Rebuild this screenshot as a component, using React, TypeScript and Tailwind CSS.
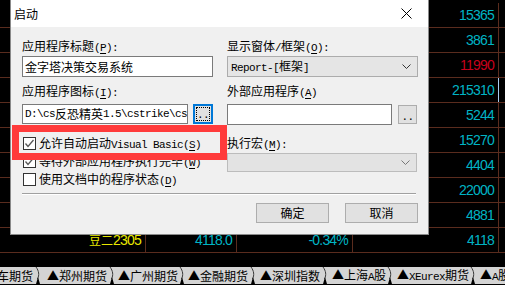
import React from "react";

const mono = "font-['Liberation_Mono',monospace] text-[11px] tracking-[-0.6px]";
const cjk = "font-['Noto_Sans_CJK_SC',sans-serif] text-[12px]";
const num = "font-['Liberation_Sans',Arial,sans-serif] text-[14px] tracking-[-0.8px]";

// "&X" marks the underlined accelerator letter
function Txt({ t }: { t: string }) {
  const out: React.ReactNode[] = [];
  const re = /&(.)|([\x20-\x25\x27-\x7e]+)|([^\x20-\x7e]+)/g;
  let m: RegExpExecArray | null;
  let i = 0;
  while ((m = re.exec(t))) {
    if (m[1]) out.push(<span key={i++} className={mono + " underline underline-offset-2"}>{m[1]}</span>);
    else if (m[2]) out.push(<span key={i++} className={mono + " whitespace-pre"}>{m[2]}</span>);
    else out.push(<span key={i++} className={cjk}>{m[3]}</span>);
  }
  return <>{out}</>;
}

const rows: [string, string][] = [
  ["15365", "text-[#00b4c4]"],
  ["3861", "text-[#00b4c4]"],
  ["11990", "text-[#c8001c]"],
  ["215310", "text-[#00b4c4]"],
  ["5244", "text-[#00b4c4]"],
  ["15270", "text-[#00b4c4]"],
  ["4404", "text-[#00b4c4]"],
  ["22000", "text-[#00b4c4]"],
  ["4881", "text-[#00b4c4]"],
];

const tabs = [
  { label: "车期货", w: "w-[42px]", pl: "pl-0 -ml-[3px]" },
  { label: "▲郑州期货", w: "w-[74px]", pl: "pl-[5px]" },
  { label: "▲广州期货", w: "w-[70px]", pl: "pl-[2px]" },
  { label: "▲金融期货", w: "w-[71px]", pl: "pl-[2px]" },
  { label: "▲深圳指数", w: "w-[72px]", pl: "pl-[3px]" },
  { label: "▲上海A股", w: "w-[63px]", pl: "pl-[3px]" },
  { label: "▲XEurex期货", w: "w-[85px]", pl: "pl-[5px]" },
];

function TabSep() {
  return (
    <svg width="8" height="17" viewBox="0 0 8 17" className="shrink-0">
      <path d="M2 0 C5 4 5.5 8 3.5 12" stroke="#3c3c3c" strokeWidth="1" fill="none" />
      <polygon points="2,17 4,10 6,17" fill="#000" />
    </svg>
  );
}

function Chevron({ color }: { color: string }) {
  return (
    <svg width="9" height="5" viewBox="0 0 9 5">
      <polyline points="0.5,0.5 4.5,4.5 8.5,0.5" stroke={color} strokeWidth="1" fill="none" />
    </svg>
  );
}

function Check({ on }: { on: boolean }) {
  return (
    <div className="w-[13px] h-[13px] border border-[#333] bg-white flex items-center justify-center">
      {on && (
        <svg width="11" height="11" viewBox="0 0 11 11">
          <polyline points="1.5,5.5 4,8.5 9.5,2" stroke="#555" strokeWidth="1.3" fill="none" />
        </svg>
      )}
    </div>
  );
}

function Board() {
  return (
    <div className="bg-black w-[505px] h-[285px] flex flex-col">
      <div className="h-[3px]" />
      {rows.map(([v, c], i) => (
        <div key={i} className="flex h-[25px] border-b border-[#5a2c1e]">
          <div className="w-[146px] border-r border-[#5a2c1e]" />
          <div className="w-[91px] border-r border-[#5a2c1e]" />
          <div className="w-[116px] border-r border-[#5a2c1e]" />
          <div
            className={
              "w-[146px] border-r flex items-center justify-end pr-[4px] " +
              (i === 3 ? "border-[#a8cdf0]" : "border-[#5a2c1e]")
            }
          >
            <span className={num + " " + c}>{v}</span>
          </div>
          <div className="flex-1" />
        </div>
      ))}
      <div className="flex h-[25px] border-b border-[#5a2c1e] text-[#00b4c4]">
        <div className="w-[146px] border-r border-[#5a2c1e] flex items-center justify-end pr-[4px] text-[#e8e800]">
          <span className={cjk}>豆二</span>
          <span className={num}>2305</span>
        </div>
        <div className="w-[91px] border-r border-[#5a2c1e] flex items-center justify-end pr-[4px]">
          <span className={num}>4118.0</span>
        </div>
        <div className="w-[116px] border-r border-[#5a2c1e] flex items-center justify-end pr-[4px]">
          <span className={num}>-0.34%</span>
        </div>
        <div className="w-[146px] border-r border-[#5a2c1e] flex items-center justify-end pr-[4px]">
          <span className={num}>4118</span>
        </div>
        <div className="flex-1" />
      </div>
      <div className="h-[14px]" />
      <div className="h-[17px] bg-[#d4d4d4] flex items-center overflow-hidden text-black leading-[17px]">
        {tabs.map((t) => (
          <div key={t.label} className={t.w + " shrink-0 flex items-center justify-between h-full"}>
            <span className={t.pl + " whitespace-nowrap"}>
              <Txt t={t.label} />
            </span>
            <TabSep />
          </div>
        ))}
        <span className="pl-[3px] whitespace-nowrap">
          <Txt t="▲A股" />
        </span>
      </div>
    </div>
  );
}

function Dialog() {
  return (
    <div className="absolute left-[10px] top-0 w-[419px] h-[235px] border-x border-b border-[#8a8a8a] flex flex-col text-black">
      <div className="h-[27px] bg-white flex items-center justify-between pl-[3px] pr-[16px]">
        <span className={cjk}>启动</span>
        <svg width="11" height="11" viewBox="0 0 11 11">
          <path d="M0.5 0.5 L10.5 10.5 M10.5 0.5 L0.5 10.5" stroke="#000" strokeWidth="1" />
        </svg>
      </div>
      <div className="flex-1 bg-[#f0f0f0] pl-[11px] pr-[9px] pt-[10px] leading-[16px]">
        <div className="flex gap-[14px]">
          <div className="w-[191px] flex flex-col">
            <div className="h-[16px]"><Txt t="应用程序标题(&P):" /></div>
            <div className="mt-[3px] h-[21px] bg-white border border-[#7a7a7a] flex items-center pl-[2px]">
              <Txt t="金字塔决策交易系统" />
            </div>
            <div className="mt-[5px] h-[16px]"><Txt t="应用程序图标(&I):" /></div>
            <div className="mt-[6px] flex items-center gap-[5px]">
              <div className="w-[166px] h-[20px] bg-white border border-[#7a7a7a] flex items-center pl-[2px] overflow-hidden whitespace-nowrap">
                <Txt t="D:\cs反恐精英1.5\cstrike\cs" />
              </div>
              <div className="w-[20px] h-[20px] border-2 border-[#0078d7] bg-[#e1e1e1] p-[1px]">
                <div className="w-full h-full border border-dotted border-black flex items-end justify-center pb-[1px]">
                  <span className={mono + " leading-[8px]"}>..</span>
                </div>
              </div>
            </div>
            <div className="mt-[10px] flex flex-col">
              <div className="h-[18px] flex items-center gap-[3px] pl-[1px]">
                <Check on />
                <span><Txt t="允许自动启动Visual Basic(&S)" /></span>
              </div>
              <div className="h-[18px] flex items-center gap-[3px] pl-[1px]">
                <Check on />
                <span><Txt t="等待外部应用程序执行完毕(&W)" /></span>
              </div>
              <div className="h-[18px] flex items-center gap-[3px] pl-[1px]">
                <Check on={false} />
                <span><Txt t="使用文档中的程序状态(&D)" /></span>
              </div>
            </div>
          </div>
          <div className="w-[191px] flex flex-col">
            <div className="h-[16px]"><Txt t="显示窗体/框架(&O):" /></div>
            <div className="mt-[3px] h-[21px] bg-[#e5e5e5] border border-[#acacac] flex items-center justify-between pl-[3px] pr-[6px]">
              <span><Txt t="Report-[框架]" /></span>
              <Chevron color="#333" />
            </div>
            <div className="mt-[5px] h-[16px]"><Txt t="外部应用程序(&A)" /></div>
            <div className="mt-[6px] flex items-center gap-[6px]">
              <div className="w-[165px] h-[21px] bg-white border border-[#7a7a7a]" />
              <div className="w-[19px] h-[19px] border border-[#adadad] bg-[#e1e1e1] flex items-end justify-center pb-[2px]">
                <span className={mono + " leading-[8px]"}>..</span>
              </div>
            </div>
            <div className="mt-[9px] h-[16px]"><Txt t="执行宏(&M):" /></div>
            <div className="mt-[3px] h-[19px] w-[190px] bg-[#e3e3e3] border border-[#bcbcbc] flex items-center justify-end pr-[6px]">
              <Chevron color="#777" />
            </div>
          </div>
        </div>
        <div className="mt-[5px] mr-[3px] border-t border-[#a0a0a0] border-b border-b-white" />
        <div className="mt-[8px] flex justify-end gap-[16px] pr-[1px]">
          <div className="w-[73px] h-[20px] bg-[#e1e1e1] border border-[#adadad] flex items-center justify-center">
            <Txt t="确定" />
          </div>
          <div className="w-[73px] h-[20px] bg-[#e1e1e1] border border-[#adadad] flex items-center justify-center">
            <Txt t="取消" />
          </div>
        </div>
      </div>
    </div>
  );
}

export default function App() {
  return (
    <div className="relative w-[505px] h-[285px] overflow-hidden">
      <Board />
      <Dialog />
      <div className="absolute left-[12px] top-[125px] w-[215px] h-[35px] border-[7px] border-[#ff3b3b]" />
    </div>
  );
}
